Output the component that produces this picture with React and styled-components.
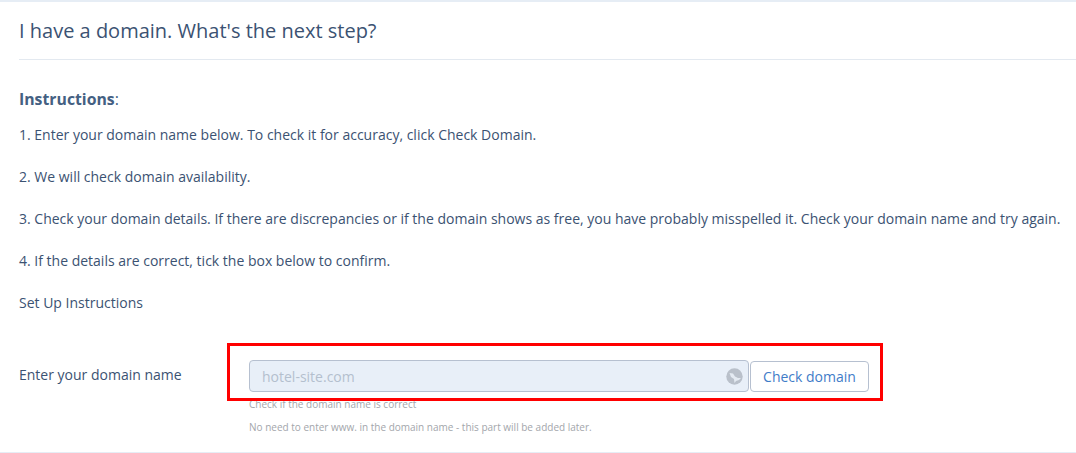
import { createGlobalStyle, styled } from "styled-components"

const GlobalStyle = createGlobalStyle`
    html, body {
        margin: 0;
        padding: 0;
        background: #fff;
    }
    body {
        font-family: "Open Sans", "Liberation Sans", sans-serif;
        color: #3b5272;
    }
`

const steps = [
    "1. Enter your domain name below. To check it for accuracy, click Check Domain.",
    "2. We will check domain availability.",
    "3. Check your domain details. If there are discrepancies or if the domain shows as free, you have probably misspelled it. Check your domain name and try again.",
    "4. If the details are correct, tick the box below to confirm.",
]

function GlobeIcon() {
    return (
        <svg width="17" height="17" viewBox="0 0 17 17">
            <circle cx="8.5" cy="8.5" r="8.2" fill="#b9c0ca" />
            <path d="M3.5 5 L7 5.5 L9 8.5 L12 10 L15 10 L13 12 L10 13 L8.5 15 L8 11 L5 9 Z" fill="#e4eaf2" />
        </svg>
    )
}

export default function App() {
    return (
        <Page>
            <GlobalStyle />
            <Title>I have a domain. What's the next step?</Title>
            <Content>
                <Heading><strong>Instructions</strong>:</Heading>
                {steps.map((step) => (
                    <Step key={step}>{step}</Step>
                ))}
                <Step>Set Up Instructions</Step>
                <FormRow>
                    <FieldLabel>Enter your domain name</FieldLabel>
                    <Field>
                        <InputRow>
                            <InputBox>
                                <Placeholder>hotel-site.com</Placeholder>
                                <GlobeIcon />
                            </InputBox>
                            <CheckButton>Check domain</CheckButton>
                        </InputRow>
                        <Hint>Check if the domain name is correct</Hint>
                        <Note>No need to enter www. in the domain name - this part will be added later.</Note>
                    </Field>
                    <Highlight />
                </FormRow>
            </Content>
        </Page>
    )
}

const Page = styled.main`
    width: 1076px;
    height: 453px;
    box-sizing: border-box;
    overflow: hidden;
    border-top: 2px solid #e6edf5;
    border-bottom: 1px solid #e6edf5;
`
const Title = styled.h1`
    height: 58px;
    margin: 0 0 0 19px;
    box-sizing: border-box;
    padding-top: 14px;
    border-bottom: 1px solid #e3e9f0;
    font-size: 20px;
    line-height: 30px;
    font-weight: 400;
    color: #3b5272;
`
const Content = styled.section`
    padding: 29px 0 0 19px;
`
const Heading = styled.h2`
    margin: 0 0 16px;
    font-size: 16px;
    line-height: 20px;
    font-weight: 400;
    color: #446082;
    strong {
        font-size: 15.8px;
        font-weight: 700;
    }
`
const Step = styled.p`
    margin: 0 0 22px;
    font-size: 14px;
    line-height: 20px;
    white-space: nowrap;
    color: #3b5272;
`
const FormRow = styled.div`
    position: relative;
    display: flex;
    margin-top: 47px;
`
const FieldLabel = styled.label`
    width: 230px;
    padding-top: 5px;
    font-size: 14px;
    line-height: 20px;
    color: #3b5272;
`
const Field = styled.div`
    display: flex;
    flex-direction: column;
`
const InputRow = styled.div`
    display: flex;
    align-items: center;
    gap: 1px;
`
const InputBox = styled.div`
    width: 500px;
    height: 32px;
    box-sizing: border-box;
    display: flex;
    align-items: center;
    justify-content: space-between;
    padding: 0 5px 0 12px;
    background: #e8eff8;
    border: 1px solid #b6c0d0;
    border-radius: 4px;
`
const Placeholder = styled.span`
    font-size: 14px;
    color: #b4bfce;
`
const CheckButton = styled.button`
    width: 119px;
    height: 31px;
    padding: 0;
    background: #fff;
    border: 1px solid #b6c0d0;
    border-radius: 4px;
    font-family: inherit;
    font-size: 14px;
    color: #3f7cc8;
`
const Hint = styled.small`
    margin-top: 4px;
    font-size: 10px;
    line-height: 16px;
    color: #a3a6ab;
`
const Note = styled.small`
    margin-top: 7px;
    font-size: 10px;
    line-height: 16px;
    color: #a3a6ab;
`
const Highlight = styled.div`
    position: absolute;
    left: 208px;
    top: -17px;
    width: 656px;
    height: 58px;
    box-sizing: border-box;
    border: 3px solid #f00;
    pointer-events: none;
`
